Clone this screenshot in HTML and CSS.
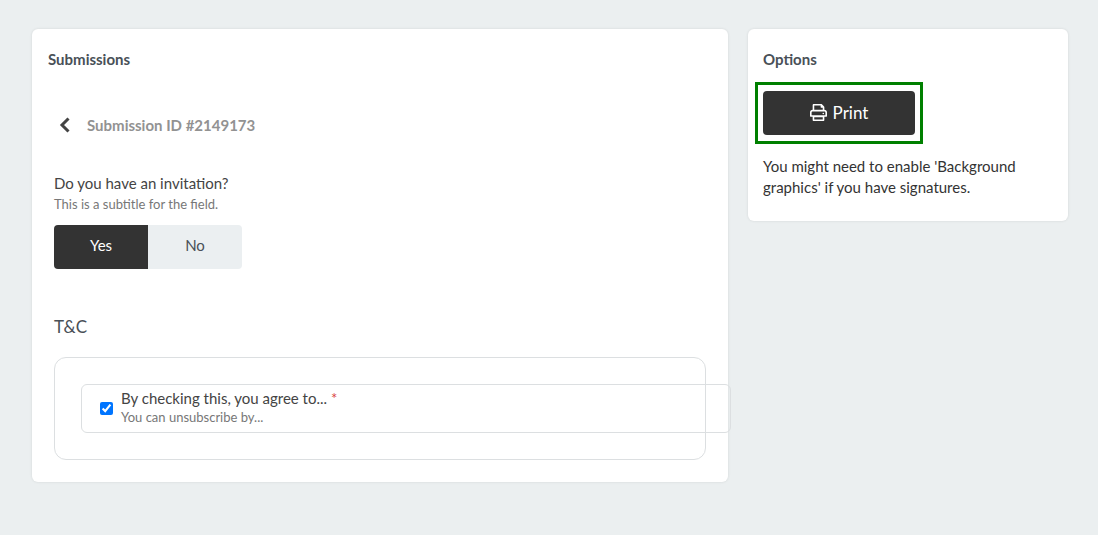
FILE: index.html
```html
<!DOCTYPE html>
<html lang="en">
<head>
    <meta charset="UTF-8">
    <meta name="viewport" content="width=device-width, initial-scale=1.0">
    <title>Submissions</title>
    <link rel="stylesheet" href="styles.css">
</head>
<body>

    <div class="page">
        <main class="card">
            <h2 class="card-title">Submissions</h2>

            <div class="submission">
                <div class="submission-header">
                    <a href="#" class="back-link" aria-label="Back">
                        <svg width="12" height="16" viewBox="0 0 12 16" fill="none" stroke="currentColor" stroke-width="3">
                            <path d="M9.5 1.5 3 8l6.5 6.5"/>
                        </svg>
                    </a>
                    <h3 class="submission-id">Submission ID #2149173</h3>
                </div>

                <div class="field">
                    <div class="field-label" id="invitation-label">Do you have an invitation?</div>
                    <div class="field-subtitle">This is a subtitle for the field.</div>
                    <div class="toggle" role="group" aria-labelledby="invitation-label">
                        <button type="button" class="toggle-button active" aria-pressed="true">Yes</button>
                        <button type="button" class="toggle-button" aria-pressed="false">No</button>
                    </div>
                </div>

                <h4 class="section-title">T&amp;C</h4>
                <div class="terms">
                    <div class="terms-option">
                        <input type="checkbox" id="agree" class="terms-checkbox" checked>
                        <label for="agree" class="terms-text">
                            <span class="terms-label">By checking this, you agree to... <span class="required">*</span></span>
                            <span class="terms-subtitle">You can unsubscribe by...</span>
                        </label>
                    </div>
                </div>
            </div>
        </main>

        <aside class="card options">
            <h2 class="card-title">Options</h2>
            <div class="print-highlight">
                <button type="button" class="print-button">
                    <svg width="17" height="17" viewBox="0 0 512 512" fill="currentColor">
                        <path d="M400 264c-13.3 0-24 10.700-24 24s10.700 24 24 24 24-10.700 24-24-10.700-24-24-24zm32-88V99.900c0-12.700-5.100-24.900-14.100-33.900L366.100 14.100c-9-9-21.200-14.100-33.900-14.100H112C94.300 0 80 14.300 80 32v144c-44.200 0-80 35.800-80 80v112c0 8.800 7.200 16 16 16h64v96c0 17.700 14.300 32 32 32h288c17.700 0 32-14.300 32-32v-96h64c8.800 0 16-7.200 16-16V256c0-44.200-35.800-80-80-80zM128 48h192v48c0 8.800 7.200 16 16 16h48v64H128V48zm256 416H128v-64h256v64zm80-128H48v-80c0-17.600 14.400-32 32-32h352c17.600 0 32 14.400 32 32v80z"/>
                    </svg>
                    Print
                </button>
            </div>
            <p class="options-note">You might need to enable 'Background graphics' if you have signatures.</p>
        </aside>
    </div>

</body>
</html>
```

FILE: styles.css
```css
* {
    box-sizing: border-box;
}
body {
    margin: 0;
    background-color: #ebeff0;
    font-family: Lato, "Open Sans", sans-serif;
    font-size: 16px;
    line-height: 20px;
    color: #444;
}
h2, h3, h4, p {
    margin: 0;
}
button {
    border: none;
    font-family: inherit;
    cursor: pointer;
}
.page {
    display: grid;
    grid-template-columns: 1fr 320px;
    align-items: start;
    gap: 20px;
    padding: 29px 30px 29px 32px;
}
.card {
    padding: 20px 16px;
    background-color: #fff;
    border-radius: 6px;
    box-shadow: 0 0 3px rgba(0, 0, 0, 0.1);
}
.card-title {
    font-size: 15px;
    font-weight: bold;
    line-height: 20px;
    color: #495057;
}
.submission {
    padding: 46px 6px 2px;
}
.submission-header {
    display: flex;
    align-items: center;
    gap: 16px;
    padding-left: 5px;
}
.back-link {
    display: flex;
    color: #444;
}
.submission-id {
    font-size: 15px;
    font-weight: bold;
    color: #929292;
}
.field {
    margin-top: 38px;
}
.field-label {
    font-size: 15px;
}
.field-subtitle {
    margin-top: 1px;
    font-size: 13px;
    color: #777;
}
.toggle {
    display: flex;
    width: fit-content;
    margin-top: 11px;
    border-radius: 4px;
    overflow: hidden;
}
.toggle-button {
    width: 94px;
    height: 44px;
    padding: 0 0 4px;
    background-color: #ebeff1;
    font-size: 15px;
    color: #495057;
}
.toggle-button.active {
    background-color: #333;
    color: #fff;
}
.section-title {
    margin-top: 46px;
    font-size: 17px;
    font-weight: normal;
    line-height: 24px;
    color: #495057;
}
.terms {
    margin-top: 18px;
    padding: 26px;
    border: 1px solid #dcdfe1;
    border-radius: 12px;
}
/* the option runs past the frame on its right side */
.terms-option {
    display: flex;
    align-items: center;
    gap: 8px;
    width: calc(100% + 52px);
    padding: 3px 18px;
    border: 1px solid #dcdfe1;
    border-radius: 6px;
}
.terms-checkbox {
    width: 13px;
    height: 13px;
    margin: 0;
}
.terms-text {
    padding-bottom: 3px;
}
.terms-label {
    display: block;
    font-size: 15px;
}
.terms-subtitle {
    display: block;
    font-size: 13px;
    line-height: 18px;
    color: #777;
}
.required {
    color: #d9443f;
}
.options {
    padding: 20px 15px 23px;
}
/* frame drawn around the print button */
.print-highlight {
    width: fit-content;
    margin: 13px 0 0 -8px;
    padding: 6px 5px;
    border: 3px solid #008000;
}
.print-button {
    display: flex;
    align-items: center;
    justify-content: center;
    gap: 6px;
    width: 152px;
    height: 44px;
    padding: 0 0 1px;
    border-radius: 4px;
    background-color: #333;
    font-size: 17px;
    color: #fff;
}
.options-note {
    margin-top: 12px;
    font-size: 15px;
    line-height: 21px;
    color: #333;
}
```
